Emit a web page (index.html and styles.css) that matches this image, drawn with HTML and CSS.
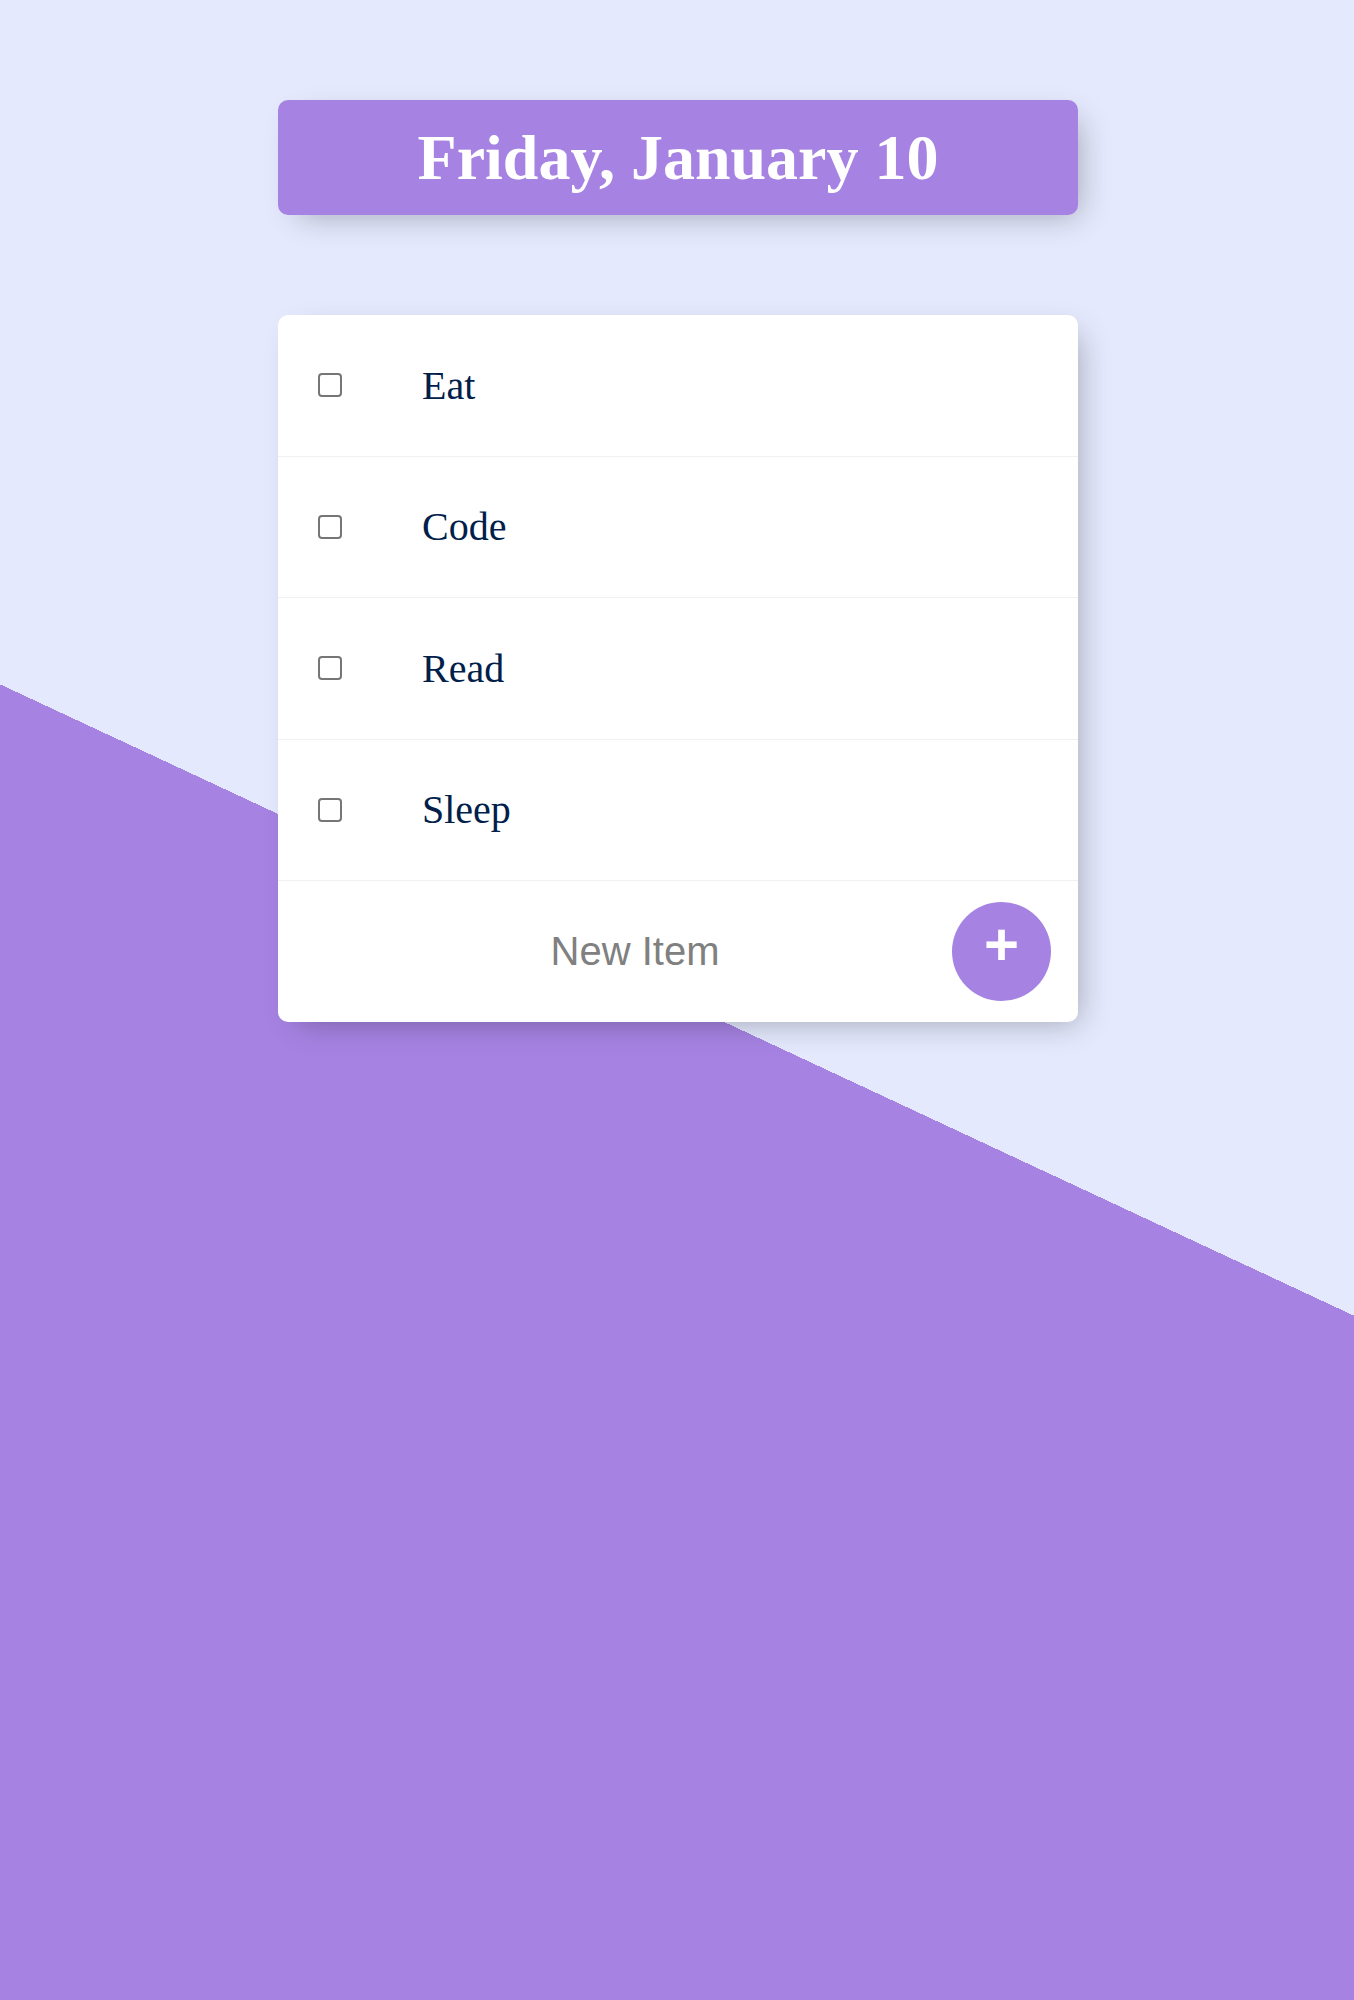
FILE: index.html
```html
<!DOCTYPE html>
<html lang="en">
<head>
<meta charset="utf-8">
<title>To-Do List</title>
<link rel="stylesheet" href="styles.css">
</head>
<body>
  <div class="box heading">
    <h1 class="title">Friday, January 10</h1>
  </div>
  <div class="box">
    <div class="item">
      <input class="check" type="checkbox">
      <p class="label">Eat</p>
    </div>
    <div class="item">
      <input class="check" type="checkbox">
      <p class="label">Code</p>
    </div>
    <div class="item">
      <input class="check" type="checkbox">
      <p class="label">Read</p>
    </div>
    <div class="item">
      <input class="check" type="checkbox">
      <p class="label">Sleep</p>
    </div>
    <form class="item new-form" action="#" onsubmit="return false">
      <input class="new-input" type="text" name="newItem" placeholder="New Item" autocomplete="off">
      <button class="add-btn" type="submit">+</button>
    </form>
  </div>
</body>
</html>
```
FILE: styles.css
```css
html {
  background-color: #E4E9FD;
  background-image: linear-gradient(25deg, #A683E3 50%, #E4E9FD 50%);
  min-height: 2000px;
  font-family: "Liberation Serif", "Times New Roman", serif;
}

body {
  margin: 0;
  padding: 1px 0 0 2px;
}

.box {
  width: 800px;
  margin: 99px auto 100px;
  background: #ffffff;
  border-radius: 10px;
  box-shadow: 10px 10px 30px -10px rgba(0, 0, 0, 0.3);
}

.heading {
  background-color: #A683E3;
  text-align: center;
}

.title {
  margin: 0;
  padding: 20px;
  color: #ffffff;
  font-size: 64px;
  font-weight: bold;
  line-height: 75px;
}

.item {
  min-height: 140.5px;
  display: flex;
  align-items: center;
  border-bottom: 1px solid #F1F1F1;
}

.item:last-child {
  border-bottom: 0;
}

.check {
  appearance: none;
  -webkit-appearance: none;
  box-sizing: border-box;
  flex-shrink: 0;
  width: 24px;
  height: 24px;
  margin: 40px;
  border: 2px solid #767676;
  border-radius: 4px;
  background: #ffffff;
}

.label {
  margin: 0;
  padding: 40px;
  font-size: 40px;
  font-weight: normal;
  color: #00204a;
}

.new-form {
  margin-left: 40px;
}

.new-input {
  box-sizing: border-box;
  width: 634px;
  height: 124px;
  padding: 2px 4px;
  border: none;
  background: transparent;
  text-align: center;
  font-family: "Liberation Sans", Arial, sans-serif;
  font-size: 40px;
  color: #00204a;
  outline: none;
}

.new-input::placeholder {
  color: grey;
  opacity: 1;
}

.add-btn {
  box-sizing: border-box;
  width: 99px;
  height: 99px;
  border-radius: 50%;
  border: 0;
  padding: 0 0 12px;
  background-color: #A683E3;
  color: #ffffff;
  font-family: "Liberation Sans", Arial, sans-serif;
  font-size: 60px;
  font-weight: bold;
  line-height: 1;
  cursor: pointer;
}
```
